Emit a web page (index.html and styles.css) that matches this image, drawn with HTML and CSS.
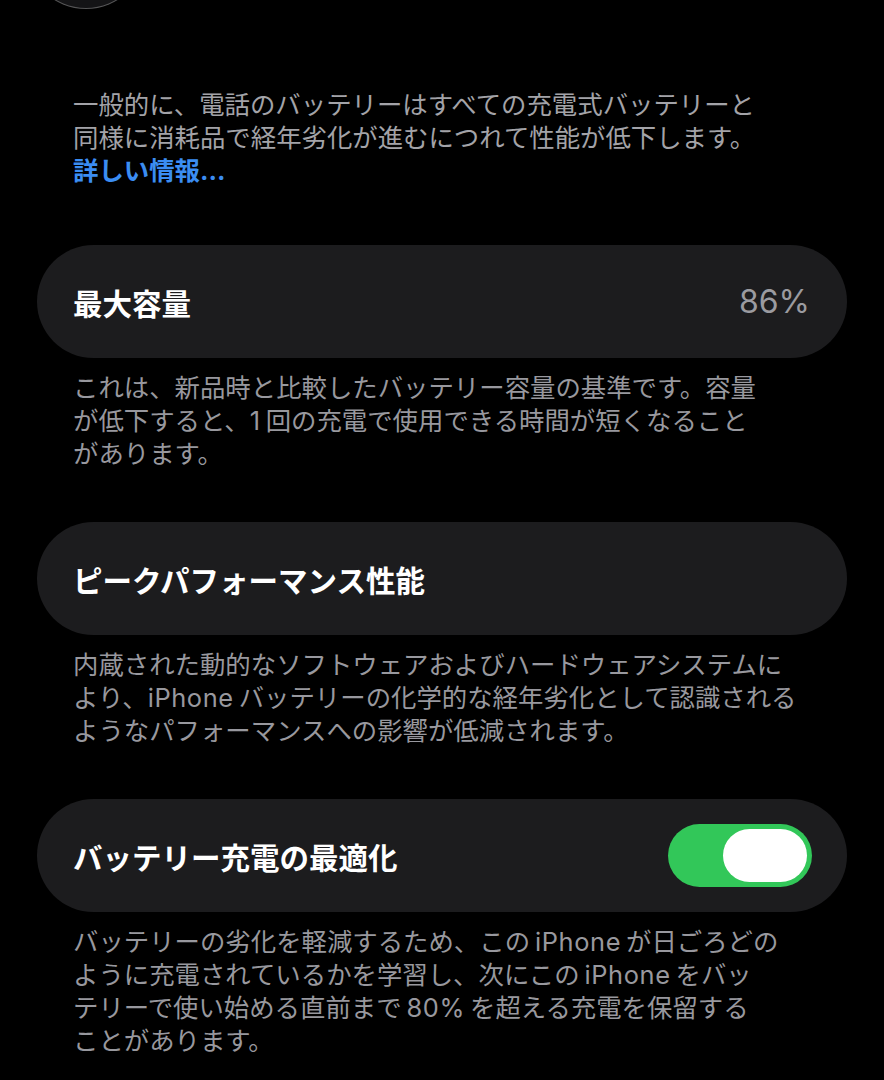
FILE: index.html
```html
<!DOCTYPE html>
<html lang="ja">
<head>
<meta charset="utf-8">
<title>バッテリーの状態</title>
<link rel="stylesheet" href="styles.css">
</head>
<body>
<main class="screen">
  <div class="hero-ring"></div>

  <p class="note note-intro">一般的に、電話のバッテリーはすべての充電式バッテリーと<br>同様に消耗品で経年劣化が進むにつれて性能が低下します。<br><a class="link" href="#">詳しい情報...</a></p>

  <section class="row">
    <span class="row-title">最大容量</span>
    <span class="row-value">86%</span>
  </section>
  <p class="note">これは、新品時と比較したバッテリー容量の基準です。容量<br>が低下すると、<span class="latin latin-lead">1</span>回の充電で使用できる時間が短くなること<br>があります。</p>

  <section class="row">
    <span class="row-title">ピークパフォーマンス性能</span>
  </section>
  <p class="note">内蔵された動的なソフトウェアおよびハードウェアシステムに<br>より、<span class="latin latin-lead">iPhone</span>バッテリーの化学的な経年劣化として認識される<br>ようなパフォーマンスへの影響が低減されます。</p>

  <section class="row">
    <span class="row-title">バッテリー充電の最適化</span>
    <span class="switch is-on"><span class="switch-knob"></span></span>
  </section>
  <p class="note">バッテリーの劣化を軽減するため、この<span class="latin">iPhone</span>が日ごろどの<br>ように充電されているかを学習し、次にこの<span class="latin">iPhone</span>をバッ<br>テリーで使い始める直前まで<span class="latin">80%</span>を超える充電を保留する<br>ことがあります。</p>
</main>
</body>
</html>
```

FILE: styles.css
```css
html, body {
  margin: 0;
  background: #000;
}

body {
  font-family: "Inter", "Noto Sans CJK JP", sans-serif;
  color: #fff;
  overflow: hidden;
}

.screen {
  width: 884px;
  height: 1080px;
  display: flex;
  flex-direction: column;
  overflow: hidden;
}

/* bottom edge of the round image sitting above the list */
.hero-ring {
  width: 120px;
  height: 120px;
  margin: -111px 0 0 26px;
  border-radius: 50%;
  box-sizing: border-box;
  background: #141416;
  border: 1.5px solid rgba(255, 255, 255, 0.28);
  flex: none;
}

.note {
  margin: 13px 0 0;
  padding: 0 36px 0 73px;
  font-size: 25.4px;
  line-height: 33px;
  color: #98989e;
  white-space: nowrap;
}

.note-intro {
  margin-top: 79px;
  color: #a3a3a8;
}

/* latin runs inside Japanese text get a little breathing room */
.latin {
  margin: 0 5px;
  letter-spacing: 0.6px;
}

.latin-lead {
  margin-left: 0;
}

.link {
  color: #3b8df2;
  font-weight: 700;
  text-decoration: none;
}

.row {
  margin: 52px 37px 0;
  height: 113px;
  border-radius: 57px;
  background: #1c1c1e;
  display: flex;
  align-items: center;
  justify-content: space-between;
  padding: 0 35px 0 36px;
  box-sizing: border-box;
  flex: none;
}

.note-intro + .row {
  margin-top: 58px;
}

.row-title {
  font-size: 29.5px;
  font-weight: 700;
  color: #fff;
  white-space: nowrap;
}

.row-value {
  font-size: 32px;
  color: #9b9ba0;
  margin-right: 2px;
}

.switch {
  width: 144px;
  height: 63px;
  border-radius: 32px;
  background: #32c759;
  display: flex;
  align-items: center;
  justify-content: flex-end;
  padding: 0 5px;
  box-sizing: border-box;
}

.switch-knob {
  width: 84px;
  height: 53px;
  border-radius: 27px;
  background: #fff;
}
```
